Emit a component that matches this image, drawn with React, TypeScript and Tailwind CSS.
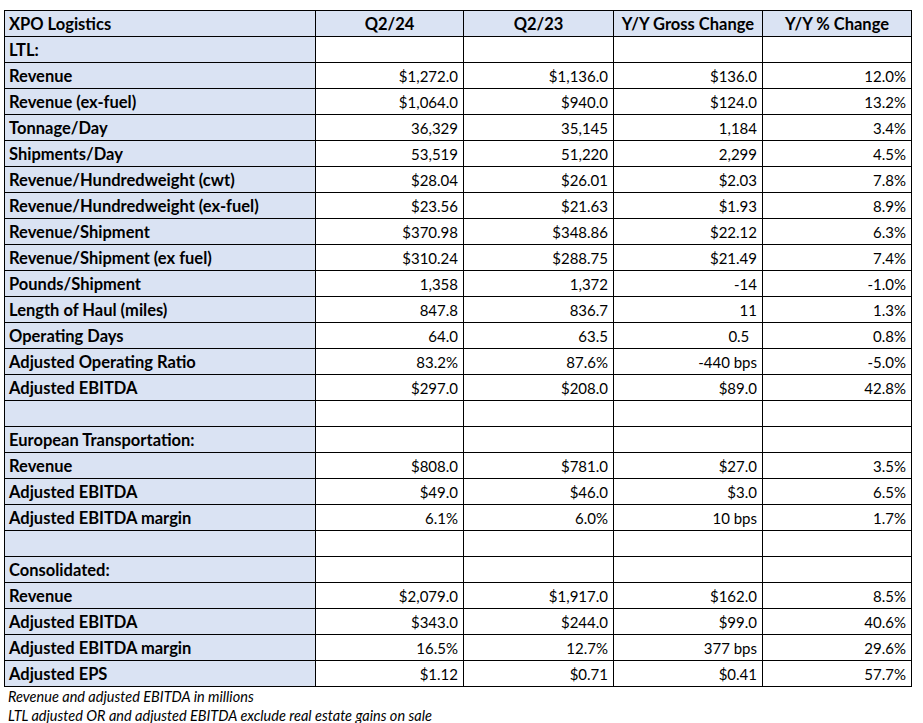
type Row = {
  label: string;
  values?: [string, string, string, string];
};

const ROWS: Row[] = [
  { label: "LTL:" },
  { label: "Revenue", values: ["$1,272.0", "$1,136.0", "$136.0", "12.0%"] },
  { label: "Revenue (ex-fuel)", values: ["$1,064.0", "$940.0", "$124.0", "13.2%"] },
  { label: "Tonnage/Day", values: ["36,329", "35,145", "1,184", "3.4%"] },
  { label: "Shipments/Day", values: ["53,519", "51,220", "2,299", "4.5%"] },
  { label: "Revenue/Hundredweight (cwt)", values: ["$28.04", "$26.01", "$2.03", "7.8%"] },
  { label: "Revenue/Hundredweight (ex-fuel)", values: ["$23.56", "$21.63", "$1.93", "8.9%"] },
  { label: "Revenue/Shipment", values: ["$370.98", "$348.86", "$22.12", "6.3%"] },
  { label: "Revenue/Shipment (ex fuel)", values: ["$310.24", "$288.75", "$21.49", "7.4%"] },
  { label: "Pounds/Shipment", values: ["1,358", "1,372", "-14", "-1.0%"] },
  { label: "Length of Haul (miles)", values: ["847.8", "836.7", "11", "1.3%"] },
  { label: "Operating Days", values: ["64.0", "63.5", "0.5\u00a0\u00a0", "0.8%"] },
  { label: "Adjusted Operating Ratio", values: ["83.2%", "87.6%", "-440 bps", "-5.0%"] },
  { label: "Adjusted EBITDA", values: ["$297.0", "$208.0", "$89.0", "42.8%"] },
  { label: "" },
  { label: "European Transportation:" },
  { label: "Revenue", values: ["$808.0", "$781.0", "$27.0", "3.5%"] },
  { label: "Adjusted EBITDA", values: ["$49.0", "$46.0", "$3.0", "6.5%"] },
  { label: "Adjusted EBITDA margin", values: ["6.1%", "6.0%", "10 bps", "1.7%"] },
  { label: "" },
  { label: "Consolidated:" },
  { label: "Revenue", values: ["$2,079.0", "$1,917.0", "$162.0", "8.5%"] },
  { label: "Adjusted EBITDA", values: ["$343.0", "$244.0", "$99.0", "40.6%"] },
  { label: "Adjusted EBITDA margin", values: ["16.5%", "12.7%", "377 bps", "29.6%"] },
  { label: "Adjusted EPS", values: ["$1.12", "$0.71", "$0.41", "57.7%"] },
];

const HEADERS = ["Q2/24", "Q2/23", "Y/Y Gross Change", "Y/Y % Change"];

export default function App() {
  return (
    <div className="min-h-[723px] w-[923px] bg-white pl-[4px] pt-[10px] font-['Lato','Liberation_Sans',sans-serif] text-[15px] text-black">
      <table className="border-collapse table-fixed w-[907px]">
        <colgroup>
          <col className="w-[311px]" />
          <col className="w-[148px]" />
          <col className="w-[150px]" />
          <col className="w-[149px]" />
          <col className="w-[149px]" />
        </colgroup>
        <thead>
          <tr className="h-[26px] bg-[#dae3f3]">
            <th className="border border-black px-[4px] text-left align-bottom pb-[2px] text-[16.5px] font-bold leading-[20px]">
              XPO Logistics
            </th>
            {HEADERS.map(h => (
              <th key={h} className="border border-black text-center align-bottom pb-[2px] text-[16.5px] font-bold leading-[20px]">
                {h}
              </th>
            ))}
          </tr>
        </thead>
        <tbody>
          {ROWS.map((row, i) => (
            <tr key={i} className="h-[26px]">
              <td className="border border-black bg-[#dae3f3] px-[4px] align-bottom pb-[2px] text-[16.5px] font-bold leading-[20px] whitespace-nowrap">
                {row.label}
              </td>
              {[0, 1, 2, 3].map(c => (
                <td
                  key={c}
                  className="border border-black pr-[5px] text-right align-bottom pb-[2px] leading-[20px] whitespace-pre"
                >
                  {row.values ? row.values[c] : ""}
                </td>
              ))}
            </tr>
          ))}
        </tbody>
      </table>
      <div className="pl-[4px] text-[14.5px] italic leading-[19px]">
        <p>Revenue and adjusted EBITDA in millions</p>
        <p>LTL adjusted OR and adjusted EBITDA exclude real estate gains on sale</p>
      </div>
    </div>
  );
}
